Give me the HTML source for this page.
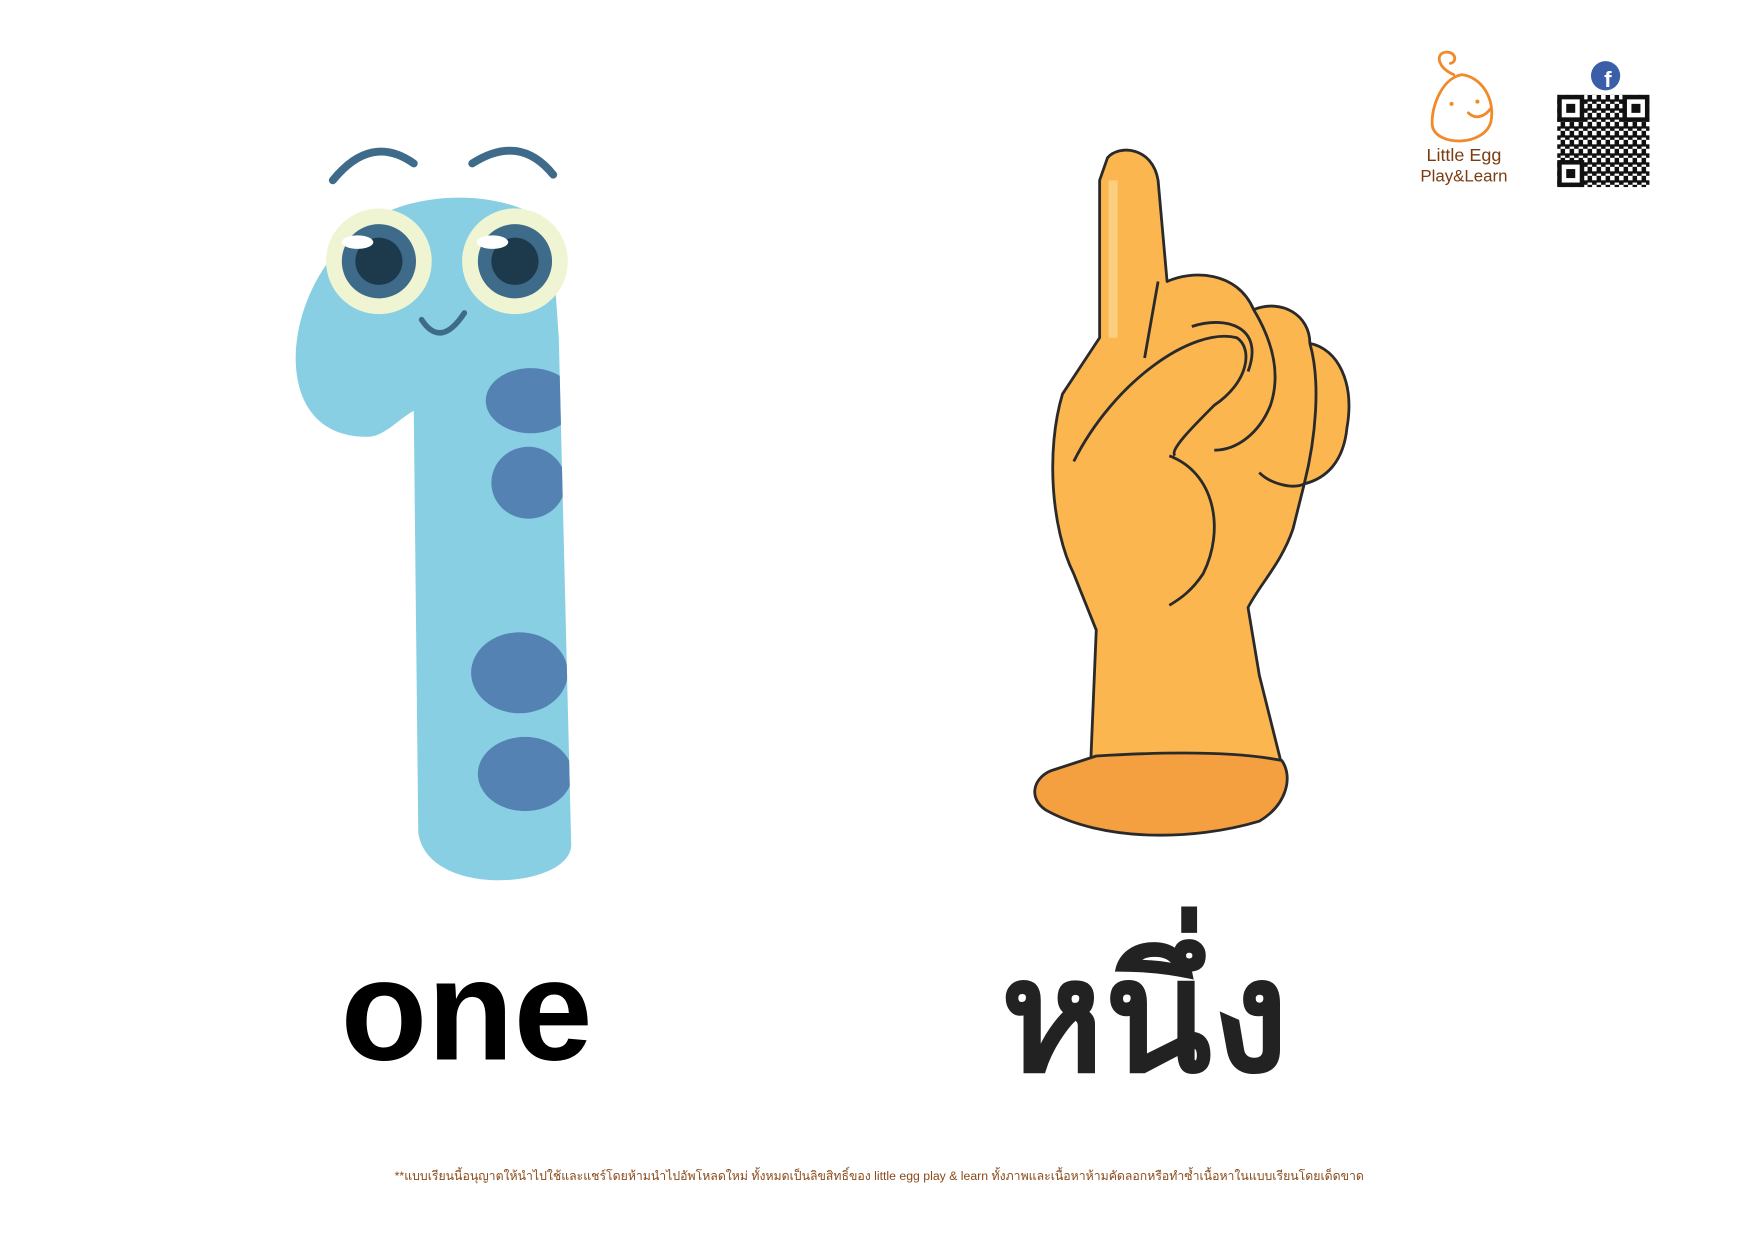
<!DOCTYPE html>
<html><head><meta charset="utf-8"><style>
html,body{margin:0;padding:0;background:#fff;}
svg{display:block}
</style></head><body>
<svg width="1754" height="1241" viewBox="0 0 1560 1103" xmlns="http://www.w3.org/2000/svg">
<defs>
<clipPath id="body"><path d="M330 388 C285 390 262 360 263 315 C265 260 300 210 340 190 C380 170 450 168 490 200 L497 300 L508 750 C510 790 380 800 372 740 L368 365 C355 372 345 385 330 388 Z"/></clipPath>
<pattern id="qr" width="8" height="8" patternUnits="userSpaceOnUse">
<rect x="0" y="0" width="4" height="4" fill="#111"/><rect x="4" y="4" width="4" height="4" fill="#111"/><rect x="4" y="0" width="4" height="2" fill="#111"/>
</pattern>
</defs>
<path d="M330 388 C285 390 262 360 263 315 C265 260 300 210 340 190 C380 170 450 168 490 200 L497 300 L508 750 C510 790 380 800 372 740 L368 365 C355 372 345 385 330 388 Z" fill="#88cfe3"/>
<g clip-path="url(#body)" fill="#5382b3">
<ellipse cx="472" cy="356" rx="40" ry="29"/>
<ellipse cx="470" cy="429" rx="33" ry="32"/>
<ellipse cx="462" cy="598" rx="43" ry="36"/>
<ellipse cx="467" cy="688" rx="42" ry="33"/>
</g>
<path d="M296 160 Q330 118 368 145" stroke="#3f6b8a" stroke-width="7" fill="none" stroke-linecap="round"/>
<path d="M420 145 Q462 118 492 155" stroke="#3f6b8a" stroke-width="7" fill="none" stroke-linecap="round"/>
<circle cx="337" cy="232" r="47" fill="#eff5d2"/>
<circle cx="337" cy="232" r="33" fill="#3f6b8a"/>
<circle cx="337" cy="232" r="21" fill="#1d3a4d"/>
<ellipse cx="318" cy="215" rx="14" ry="6" fill="#fff"/>
<circle cx="458" cy="232" r="47" fill="#eff5d2"/>
<circle cx="458" cy="232" r="33" fill="#3f6b8a"/>
<circle cx="458" cy="232" r="21" fill="#1d3a4d"/>
<ellipse cx="438" cy="215" rx="14" ry="6" fill="#fff"/>
<path d="M375 284 Q392 310 413 278" stroke="#3f6b8a" stroke-width="5" fill="none" stroke-linecap="round"/>
<g stroke="#2a2a2a" stroke-width="2.5" stroke-linejoin="round" fill="#fbb650">
<path d="M985 140 C995 128 1025 130 1030 160 L1038 250 C1060 240 1100 240 1115 275 C1140 265 1165 280 1165 305 C1190 310 1205 340 1198 380 C1195 410 1180 425 1160 430 L1150 470 C1140 500 1120 520 1110 540 L1120 600 L1140 680 L970 680 L975 560 L955 510 C935 470 930 400 945 350 L978 300 L978 160 Z"/>
<path d="M935 685 L975 672 C1040 668 1100 668 1140 676 C1150 690 1145 715 1120 730 C1060 748 980 748 930 720 C915 710 918 692 935 685 Z" fill="#f5a040"/>
<path d="M1018 318 L1030 250" fill="none"/>
<path d="M955 410 C990 340 1060 290 1100 300 C1115 310 1110 340 1080 360 C1060 380 1040 400 1045 405" fill="none"/>
<path d="M1060 290 C1090 280 1125 290 1110 330" fill="none"/>
<path d="M1115 275 C1130 300 1140 330 1130 360 C1120 385 1100 400 1080 400" fill="none"/>
<path d="M1165 305 C1175 340 1170 390 1160 430 C1150 435 1130 430 1120 420" fill="none"/>
<path d="M1040 405 C1080 420 1090 470 1070 510 C1060 525 1050 532 1040 538" fill="none"/>
</g>
<path d="M990 160 L990 300" stroke="#fde1a0" stroke-width="8" opacity=".6"/>
<text x="303" y="942" font-family="Liberation Sans, sans-serif" font-weight="bold" font-size="128" textLength="224" lengthAdjust="spacingAndGlyphs" fill="#000">one</text>
<text x="1018" y="952" text-anchor="middle" font-family="Liberation Sans, sans-serif" font-weight="bold" font-size="140" fill="#222">หนึ่ง</text>
<text x="782" y="1049" text-anchor="middle" font-family="Liberation Sans, sans-serif" font-size="11" textLength="862" lengthAdjust="spacingAndGlyphs" fill="#8a4a1a">**แบบเรียนนี้อนุญาตให้นำไปใช้และแชร์โดยห้ามนำไปอัพโหลดใหม่ ทั้งหมดเป็นลิขสิทธิ์ของ little egg play &amp; learn ทั้งภาพและเนื้อหาห้ามคัดลอกหรือทำซ้ำเนื้อหาในแบบเรียนโดยเด็ดขาด</text>
<g stroke="#f08a2a" stroke-width="2.5" fill="none" stroke-linecap="round">
<path d="M1300 66 C1280 70 1272 100 1274 112 C1278 130 1320 130 1326 108 C1330 88 1318 68 1300 66 Z"/>
<path d="M1293 66 C1278 60 1276 46 1287 46 C1295 46 1296 55 1290 56"/>
<path d="M1306 100 C1312 106 1320 104 1326 96"/>
</g>
<circle cx="1291" cy="92" r="1.8" fill="#f08a2a"/><circle cx="1314" cy="90" r="1.8" fill="#f08a2a"/>
<text x="1302" y="143" text-anchor="middle" font-family="Liberation Sans, sans-serif" font-size="16" fill="#7a3d12">Little Egg</text>
<text x="1302" y="161" text-anchor="middle" font-family="Liberation Sans, sans-serif" font-size="15" fill="#7a3d12">Play&amp;Learn</text>
<circle cx="1428" cy="67" r="13" fill="#3a5fa8"/>
<text x="1430" y="77" text-anchor="middle" font-family="Liberation Sans, sans-serif" font-weight="bold" font-size="20" fill="#fff">f</text>
<rect x="1385" y="84" width="82" height="82" fill="url(#qr)"/>
<g fill="#fff" stroke="#111" stroke-width="4">
<rect x="1387" y="86" width="20" height="20"/><rect x="1445" y="86" width="20" height="20"/><rect x="1387" y="144" width="20" height="20"/>
</g>
<g fill="#111"><rect x="1393" y="92" width="8" height="8"/><rect x="1451" y="92" width="8" height="8"/><rect x="1393" y="150" width="8" height="8"/></g>
</svg>
</body></html>
